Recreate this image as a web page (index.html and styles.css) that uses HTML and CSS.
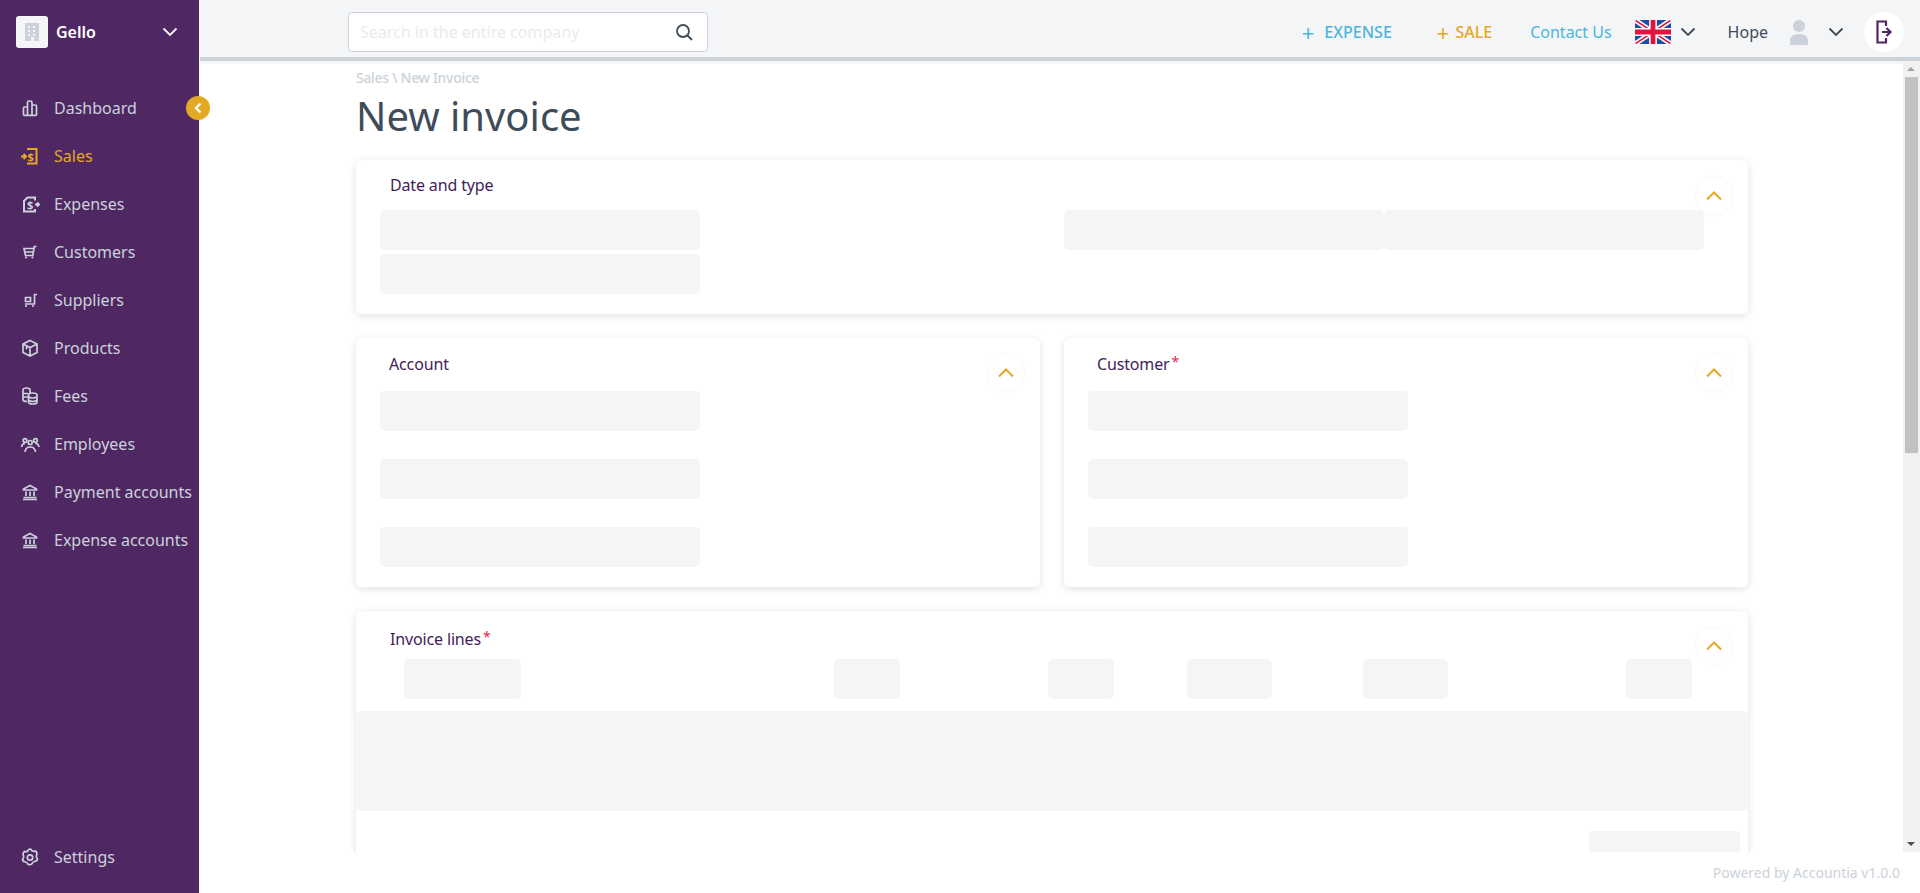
FILE: index.html
```html
<!DOCTYPE html>
<html>
<head>
<title>New invoice</title>
<meta charset="utf-8" />
<link rel="stylesheet" href="styles.css">
</head>
<body>

<aside class="sidebar">
  <div class="company">
    <span class="company-logo">
      <svg width="14" height="18" viewBox="0 0 14 18"><path fill="#cbd2da" fill-rule="evenodd" d="M0 0h14v18H9v-4H6v4H0zM3 3v2h2V3zM3 7v2h2V7zM3 11v2h2v-2zM8 3v2h2V3zM8 7v2h2V7zM8 11v2h2v-2z"/></svg>
    </span>
    <span class="company-name">Gello</span>
    <svg class="company-caret" width="16" height="10" viewBox="0 0 16 10"><path d="M1.500 1.500 8 8l6.500-6.500" fill="none" stroke="#fff" stroke-width="1.800"/></svg>
  </div>
  <nav class="nav">
    <a class="nav-item">
      <svg class="nav-icon" viewBox="0 0 18 18"><path d="M1.500 15.500V9q0-1 1-1H5M5.500 15.500V3.500q0-1.500 1.500-1.500h1.500Q10 2 10 3.500v12M10 6h3q1.500 0 1.500 1v8.500M1.500 15.500q0 .8 1 .8h11q1 0 1-.8"/></svg>
      <span>Dashboard</span>
    </a>
    <a class="nav-item active">
      <svg class="nav-icon" viewBox="0 0 18 18"><path d="M5 2h9.500v14.500H5M4 9.500H-1M1.500 7l2.500 2.500L1.500 12" stroke-width="2"/><text x="5.500" y="13.500" class="icon-text">$</text></svg>
      <span>Sales</span>
    </a>
    <a class="nav-item">
      <svg class="nav-icon" viewBox="0 0 18 18"><path d="M13 5.500V2.500H5.500L2 6v10.500h11V14M13 9.500h4M15 7.500l2 2-2 2" stroke-width="2"/><text x="5" y="13.500" class="icon-text">$</text></svg>
      <span>Expenses</span>
    </a>
    <a class="nav-item">
      <svg class="nav-icon" viewBox="0 0 18 18"><path d="M14.500 3.500H12.300L10.800 12.500H3.500L2 5.500H12M2.500 9h8.800"/><circle cx="4" cy="14.500" r="1.100" class="wheel"/><circle cx="10.500" cy="14.500" r="1.100" class="wheel"/></svg>
      <span>Customers</span>
    </a>
    <a class="nav-item">
      <svg class="nav-icon" viewBox="0 0 18 18"><path d="M15 3.500h-2.500v9.500H3M3.500 6.500h5v4h-5z"/><circle cx="4" cy="15" r="1.100" class="wheel"/><circle cx="11" cy="15" r="1.100" class="wheel"/></svg>
      <span>Suppliers</span>
    </a>
    <a class="nav-item">
      <svg class="nav-icon" viewBox="0 0 18 18"><path d="M8 1.500 15 5v8.500L8 17 1 13.500V5zM1 5l7 3.500L15 5M8 8.500V17M4.500 6.800v3.500"/></svg>
      <span>Products</span>
    </a>
    <a class="nav-item">
      <svg class="nav-icon" viewBox="0 0 18 18"><path d="M1 3q0-2 3.500-2T8 3v3M1 3v9.500q0 2 4 2M1 6.500h5M1 10h5M6.500 8q0-2 4.200-2T15 8v7q0 2-4.300 2T6.500 15zM6.500 9.500q1 1.500 4.200 1.500t4.300-1.500M6.500 13q1 1.500 4.200 1.500T15 13"/></svg>
      <span>Fees</span>
    </a>
    <a class="nav-item">
      <svg class="nav-icon" viewBox="0 0 18 18"><circle cx="3" cy="5.500" r="1.800"/><circle cx="13.500" cy="5.500" r="1.800"/><circle cx="8.200" cy="7.500" r="2"/><path d="M-.5 12q.5-3.500 3.500-3.500M17 12q-.5-3.500-3.500-3.500M3 17q.5-5 5.200-5t5.300 5"/></svg>
      <span>Employees</span>
    </a>
    <a class="nav-item">
      <svg class="nav-icon" viewBox="0 0 18 18"><path d="M8 2.500 14.500 6v1h-13V6zM4 8.500v4.500M8 8.500v4.500M12 8.500v4.500M1.500 14.500h13M1 16.500h14"/></svg>
      <span>Payment accounts</span>
    </a>
    <a class="nav-item">
      <svg class="nav-icon" viewBox="0 0 18 18"><path d="M8 2.500 14.500 6v1h-13V6zM4 8.500v4.500M8 8.500v4.500M12 8.500v4.500M1.500 14.500h13M1 16.500h14"/></svg>
      <span>Expense accounts</span>
    </a>
  </nav>
  <a class="nav-item settings">
    <svg class="nav-icon" viewBox="0 0 18 18"><path d="M8 1.200q1.500 0 2 1.500 2 1 3.500.3 1.500 1 1.500 3-1 1.300-.500 3.300 1 1 1 2.200-1 1.800-2.800 2-1.700-.2-2.500 2-1 1.200-2.500 1.200T5.700 16q-.7-2.200-2.500-2-1.700-.2-2.700-2 0-1.200 1-2.200.5-2-.5-3.300 0-2 1.500-3Q4 4.200 6 2.700q.5-1.500 2-1.500z"/><circle cx="8" cy="9.500" r="2.700"/></svg>
    <span>Settings</span>
  </a>
</aside>

<button class="collapse">
  <svg width="10" height="12" viewBox="0 0 10 12"><path d="M7.500 1.500 3 6l4.500 4.500" fill="none" stroke="#fff" stroke-width="2.400"/></svg>
</button>

<div class="main">
  <header class="topbar">
    <div class="search">
      <span class="search-text">Search in the entire company</span>
      <svg width="18" height="18" viewBox="0 0 18 18"><circle cx="8" cy="8" r="6" fill="none" stroke="#3e4c59" stroke-width="1.800"/><path d="M12.500 12.500 17 17" stroke="#3e4c59" stroke-width="1.800"/></svg>
    </div>
    <div class="actions">
      <a class="action expense"><span class="plus">+</span>EXPENSE</a>
      <a class="action sale"><span class="plus">+</span>SALE</a>
      <a class="contact">Contact Us</a>
      <svg class="flag" width="36" height="24" viewBox="0 0 60 40">
        <rect width="60" height="40" fill="#1f4ea1"/>
        <path d="M0 0 60 40M60 0 0 40" stroke="#fff" stroke-width="8"/>
        <path d="M0 0 60 40M60 0 0 40" stroke="#e0143c" stroke-width="2.600"/>
        <path d="M30 0v40M0 20h60" stroke="#fff" stroke-width="13"/>
        <path d="M30 0v40M0 20h60" stroke="#e0143c" stroke-width="8"/>
      </svg>
      <svg class="caret flag-caret" width="16" height="10" viewBox="0 0 16 10"><path d="M1.500 1.500 8 8l6.500-6.500"/></svg>
      <span class="user">Hope</span>
      <svg class="avatar" width="18" height="26" viewBox="0 0 18 26"><circle cx="9" cy="7" r="6" fill="#cbd2da"/><path d="M0 26v-4q0-7 9-7t9 7v4z" fill="#cbd2da"/></svg>
      <svg class="caret user-caret" width="16" height="10" viewBox="0 0 16 10"><path d="M1.500 1.500 8 8l6.500-6.500"/></svg>
      <button class="logout">
        <svg width="16" height="24" viewBox="0 0 16 24"><path d="M10 6V1.500H1.500v21H10V18M6 12h8M10.500 8l4 4-4 4" fill="none" stroke="#4f2763" stroke-width="2.200"/></svg>
      </button>
    </div>
  </header>

  <div class="content">
    <p class="breadcrumb">Sales \ New Invoice</p>
    <h1 class="page-title">New invoice</h1>

    <section class="card date-card">
      <h2 class="card-title">Date and type</h2>
      <button class="toggle"><svg width="16" height="10" viewBox="0 0 16 10"><path d="M1 8.500l7-7 7 7"/></svg></button>
      <div class="date-fields">
        <div class="field"></div>
        <div class="pair">
          <div class="field"></div>
          <div class="field"></div>
        </div>
        <div class="field"></div>
      </div>
    </section>

    <div class="card-row">
      <section class="card party-card">
        <h2 class="card-title">Account</h2>
        <button class="toggle"><svg width="16" height="10" viewBox="0 0 16 10"><path d="M1 8.500l7-7 7 7"/></svg></button>
        <div class="field"></div>
        <div class="field"></div>
        <div class="field"></div>
      </section>
      <section class="card party-card">
        <h2 class="card-title">Customer<span class="req">*</span></h2>
        <button class="toggle"><svg width="16" height="10" viewBox="0 0 16 10"><path d="M1 8.500l7-7 7 7"/></svg></button>
        <div class="field"></div>
        <div class="field"></div>
        <div class="field"></div>
      </section>
    </div>

    <section class="card lines-card">
      <h2 class="card-title">Invoice lines<span class="req">*</span></h2>
      <button class="toggle"><svg width="16" height="10" viewBox="0 0 16 10"><path d="M1 8.500l7-7 7 7"/></svg></button>
      <div class="line-head">
        <div class="field col-a"></div>
        <div class="field col-b"></div>
        <div class="field col-c"></div>
        <div class="field col-d"></div>
        <div class="field col-e"></div>
        <div class="field col-f"></div>
      </div>
      <div class="line-body"></div>
      <div class="field line-total"></div>
    </section>
  </div>

  <div class="scrollbar">
    <span class="arrow-up"></span>
    <span class="thumb"></span>
    <span class="arrow-down"></span>
  </div>

  <footer class="footer">Powered by Accountia v1.0.0</footer>
</div>

</body>
</html>
```

FILE: styles.css
```css
* {
  box-sizing: border-box;
}

html, body {
  height: 100%;
}

body {
  margin: 0;
  display: flex;
  overflow: hidden;
  font-family: 'Noto Sans', 'Open Sans', sans-serif;
  font-size: 16px;
  color: #3e4c59;
  background: #fff;
}

/* sidebar */
.sidebar {
  width: 200px;
  flex: none;
  display: flex;
  flex-direction: column;
  background: #4f2763;
  border-right: 1px solid #f4f5f7;
  padding-bottom: 12px;
}

.company {
  display: flex;
  align-items: center;
  padding: 16px 21px 16px 16px;
}

.company-logo {
  width: 32px;
  height: 32px;
  display: flex;
  align-items: center;
  justify-content: center;
  background: #f4f5f7;
  border-radius: 3px;
}

.company-name {
  margin-left: 8px;
  color: #fff;
  font-weight: 600;
  line-height: 22px;
}

.company-caret {
  margin-left: auto;
}

.nav {
  margin-top: 20px;
}

.nav-item {
  height: 48px;
  display: flex;
  align-items: center;
  gap: 14px;
  padding-left: 22px;
  color: #cbd2da;
  white-space: nowrap;
}

.nav-item.active {
  color: #e5a823;
}

.nav-icon {
  width: 18px;
  height: 18px;
  flex: none;
  overflow: visible;
  fill: none;
  stroke: currentColor;
  stroke-width: 1.700;
}

.icon-text {
  font-size: 11px;
  font-weight: 700;
  fill: currentColor;
  stroke: none;
}

.wheel {
  fill: currentColor;
  stroke: none;
}

.settings {
  margin-top: auto;
}

.collapse {
  position: absolute;
  left: 186px;
  top: 96px;
  width: 24px;
  height: 24px;
  padding: 0;
  border: 0;
  border-radius: 50%;
  background: #e5a823;
  display: flex;
  align-items: center;
  justify-content: center;
}

/* top bar */
.main {
  position: relative;
  flex: 1;
  min-width: 0;
  display: flex;
  flex-direction: column;
}

.topbar {
  height: 61px;
  flex: none;
  display: flex;
  align-items: center;
  padding: 7px 16px 0 148px;
  background: #f4f5f7;
  border-bottom: 4px solid #cbd2da;
}

.search {
  width: 360px;
  height: 40px;
  display: flex;
  align-items: center;
  justify-content: space-between;
  padding: 0 14px 0 11px;
  background: #fff;
  border: 1px solid #cbd2da;
  border-radius: 4px;
}

.search-text {
  color: #e9ebef;
}

.actions {
  margin-left: auto;
  display: flex;
  align-items: center;
}

.action {
  display: flex;
  align-items: center;
  font-weight: 500;
  line-height: 22px;
}

.plus {
  font-size: 22px;
  font-weight: 400;
}

.expense {
  color: #4bb5dc;
}

.expense .plus {
  margin-right: 10px;
}

.sale {
  margin-left: 45px;
  color: #e5a823;
}

.sale .plus {
  margin-right: 6px;
}

.contact {
  margin-left: 38px;
  color: #4bb5dc;
}

.flag {
  margin-left: 23px;
  border-radius: 2px;
}

.caret {
  fill: none;
  stroke: #3e4c59;
  stroke-width: 1.800;
}

.flag-caret {
  margin-left: 9px;
}

.user {
  margin-left: 32px;
}

.avatar {
  margin-left: 22px;
}

.user-caret {
  margin-left: 20px;
}

.logout {
  width: 40px;
  height: 40px;
  margin-left: 20px;
  padding: 0;
  border: 0;
  border-radius: 50%;
  background: #fff;
  display: flex;
  align-items: center;
  justify-content: center;
}

/* page */
.content {
  flex: 1;
  min-height: 0;
  overflow: hidden;
  border-top: 3px solid #f4f5f7;
  padding: 4px 156px 24px;
}

.breadcrumb {
  margin: 0;
  color: #cbd2da;
  font-size: 14px;
  font-weight: 500;
  letter-spacing: -0.3px;
  line-height: 20px;
}

.page-title {
  margin: 1px 0 17px;
  font-size: 40px;
  font-weight: 400;
  line-height: 54px;
}

.card {
  position: relative;
  width: 1392px;
  background: #fff;
  border-radius: 6px;
  box-shadow: 0 2px 8px rgba(0, 0, 0, 0.12);
}

.card-title {
  margin: 0;
  padding-left: 34px;
  color: #3f1d5c;
  font-size: 16px;
  font-weight: 400;
  letter-spacing: -0.15px;
  line-height: 22px;
}

.req {
  position: relative;
  top: -3px;
  margin-left: 2px;
  color: #e8274b;
  font-size: 14px;
  line-height: 0;
}

.toggle {
  position: absolute;
  top: 17px;
  right: 16px;
  width: 36px;
  height: 36px;
  padding: 0;
  border: 0;
  border-radius: 50%;
  background: #fff;
  box-shadow: 0 0 4px rgba(0, 0, 0, 0.05);
  display: flex;
  align-items: center;
  justify-content: center;
}

.toggle path {
  fill: none;
  stroke: #e5a823;
  stroke-width: 2;
}

.field {
  width: 320px;
  height: 40px;
  background: #f4f5f7;
  border-radius: 5px;
}

.date-card {
  padding: 14px 24px 20px;
}

.date-card .toggle {
  top: 18px;
}

.date-card .card-title {
  padding-left: 10px;
  margin-bottom: 14px;
}

.date-fields {
  display: grid;
  grid-template-columns: 684px 640px;
  row-gap: 4px;
}

.pair {
  display: flex;
}

.card-row {
  width: 1392px;
  margin-top: 24px;
  display: flex;
  gap: 24px;
}

.party-card {
  flex: 1;
  height: 249px;
  padding: 15px 24px 0;
}

.party-card .card-title {
  padding-left: 9px;
  margin-bottom: 16px;
}

.party-card .field + .field {
  margin-top: 28px;
}

.lines-card {
  height: 1028px;
  margin-top: 24px;
  padding-top: 17px;
}

.line-head {
  display: flex;
  margin-top: 9px;
  padding-left: 48px;
}

.col-a { width: 117px; }
.col-b { width: 66px; margin-left: 313px; }
.col-c { width: 66px; margin-left: 148px; }
.col-d { width: 85px; margin-left: 73px; }
.col-e { width: 85px; margin-left: 91px; }
.col-f { width: 66px; margin-left: 178px; }

.line-body {
  height: 100px;
  margin-top: 12px;
  background: #f4f5f7;
  border-radius: 5px;
}

.line-total {
  width: 151px;
  margin: 20px 8px 0 auto;
}

/* drawn by hand, the scroll area keeps its own bar hidden */
.scrollbar {
  position: absolute;
  top: 61px;
  right: 0;
  bottom: 41px;
  width: 17px;
  background: #f1f1f1;
}

.thumb {
  position: absolute;
  top: 16px;
  left: 2px;
  width: 13px;
  height: 376px;
  background: #c1c1c1;
}

.arrow-up,
.arrow-down {
  position: absolute;
  left: 4px;
  border-left: 4px solid transparent;
  border-right: 4px solid transparent;
}

.arrow-up {
  top: 6px;
  border-bottom: 4px solid #a3a3a3;
}

.arrow-down {
  bottom: 6px;
  border-top: 4px solid #505050;
}

.footer {
  height: 41px;
  flex: none;
  padding: 10px 20px 0 0;
  text-align: right;
  color: #cbd2da;
  font-size: 14px;
  line-height: 22px;
}
```
